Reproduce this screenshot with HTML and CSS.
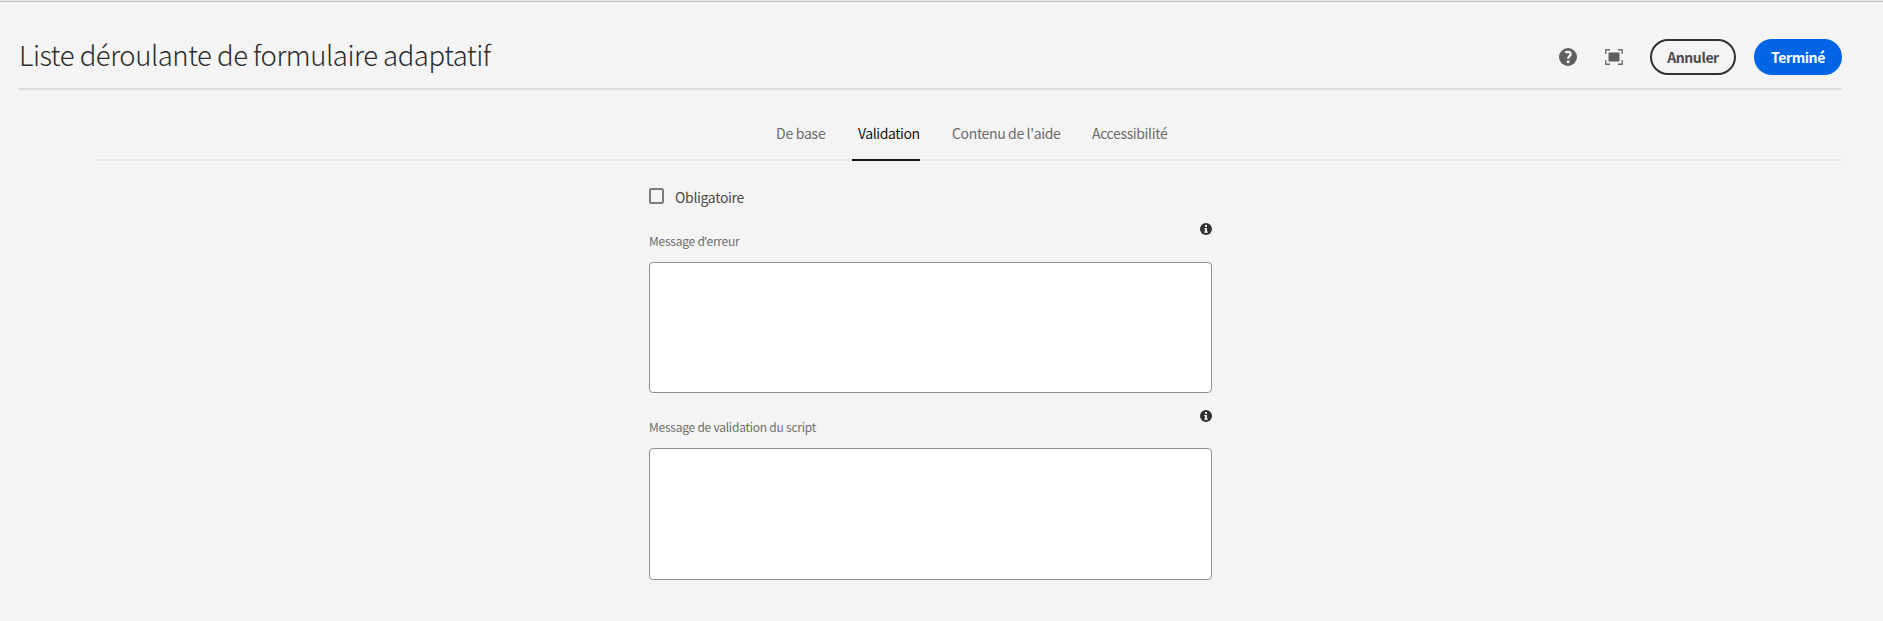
FILE: index.html
```html
<!DOCTYPE html>
<html lang="fr">
<head>
<meta charset="utf-8">
<title>Liste déroulante de formulaire adaptatif</title>
<link rel="stylesheet" href="styles.css">
</head>
<body>
<header class="header">
  <h1 class="title"><span>Liste déroulante de formulaire adaptatif</span></h1>
  <div class="actions">
    <svg class="icon-help" width="18" height="18" viewBox="0 0 18 18"><circle cx="9" cy="9" r="9" fill="#606060"/><path d="M6.2 4.6Q7.4 3.9 8.9 3.9C10.7 3.9 11.6 4.8 11.6 6.1C11.6 8.1 9.1 8.3 9.1 10.8" fill="none" stroke="#f4f4f4" stroke-width="2.3"/><circle cx="9.1" cy="13.8" r="1.5" fill="#f4f4f4"/></svg>
    <svg class="icon-full" width="18" height="16" viewBox="0 0 18 16"><path fill="#606060" d="M3.5 3.5h11v9h-11z"/><path d="M5 .75H.75V5M13 .75h4.25V5M5 15.25H.75V11M13 15.25h4.25V11" fill="none" stroke="#6a6a6a" stroke-width="1.3"/></svg>
    <button class="btn cancel"><span>Annuler</span></button>
    <button class="btn done"><span>Terminé</span></button>
  </div>
</header>
<nav class="tabs">
  <a class="tab t1"><span>De base</span></a>
  <a class="tab t2 active"><span>Validation</span></a>
  <a class="tab t3"><span>Contenu de l'aide</span></a>
  <a class="tab t4"><span>Accessibilité</span></a>
</nav>
<main class="form">
  <label class="check"><i class="box"></i><span>Obligatoire</span></label>
  <section class="field first">
    <div class="label-row"><label><span>Message d<span class="apos">’</span>erreur</span></label>
      <svg class="info" width="12" height="12" viewBox="0 0 12 12"><circle cx="6" cy="6" r="6" fill="#323232"/><path d="M5 2h2v2H5zM4.3 5H7v3.4h.9v1.3H4.2V8.4h.9V6.2h-.8z" fill="#f4f4f4"/></svg>
    </div>
    <textarea class="area"></textarea>
  </section>
  <section class="field second">
    <div class="label-row"><label><span>Message de validation du script</span></label>
      <svg class="info" width="12" height="12" viewBox="0 0 12 12"><circle cx="6" cy="6" r="6" fill="#323232"/><path d="M5 2h2v2H5zM4.3 5H7v3.4h.9v1.3H4.2V8.4h.9V6.2h-.8z" fill="#f4f4f4"/></svg>
    </div>
    <textarea class="area"></textarea>
  </section>
</main>
</body>
</html>
```
FILE: styles.css
```css
* { box-sizing: border-box; }
body {
  margin: 0;
  height: 621px;
  overflow: hidden;
  padding-top: 2px;
  background: #f4f4f4 linear-gradient(#e2e2e2 0 1px, #c2c2c2 1px 2px) no-repeat 0 0 / 100% 2px;
  font-family: "Noto Sans CJK SC", "Noto Sans", sans-serif;
  color: #4b4b4b;
}
span { white-space: nowrap; }
.header {
  display: flex;
  justify-content: space-between;
  height: 88px;
  margin: 0 41px 0 19px;
  border-bottom: 2px solid #dedede;
}
.title {
  margin: 32px 0 0 0;
  font-size: 27.5px;
  line-height: 40px;
  letter-spacing: -0.46px;
  font-weight: 300;
  color: #2c2c2c;
}
.actions { display: flex; align-items: center; height: 36px; margin-top: 37px; }
.icon-help { margin-right: 28px; }
.icon-full { margin-right: 27px; }
.btn {
  height: 36px;
  padding: 0;
  border-radius: 18px;
  font-family: inherit;
  font-size: 14px;
  line-height: 30px;
  letter-spacing: -0.4px;
  font-weight: 700;
}
.cancel { width: 86px; margin-right: 18px; border: 2px solid #323232; background: transparent; color: #4b4b4b; }
.done { width: 88px; border: 0; background: #0265e6; color: #fff; }
.tabs {
  display: flex;
  height: 71px;
  margin: 0 41px 0 96px;
  padding-left: 680px;
  border-bottom: 2px solid #e6e6e6;
}
.tab { height: 71px; padding-top: 31px; font-size: 14px; line-height: 24px; letter-spacing: -0.36px; color: #6b6b6b; }
.t1 { width: 76px; letter-spacing: -0.25px; }
.t2 { width: 68px; padding-left: 6px; margin-right: 32px; letter-spacing: -0.42px; }
.t3 { width: 140px; }
.active { color: #161616; border-bottom: 2px solid #161616; }
.form { width: 563px; margin-left: 649px; padding-top: 23px; }
.check { display: flex; align-items: center; height: 24px; font-size: 14px; line-height: 24px; letter-spacing: -0.33px; }
.check span { padding-top: 1px; }
.box { width: 15px; height: 16px; margin-right: 11px; border: 2px solid #7c7c7c; border-radius: 2px; }
.field { display: flex; flex-direction: column; }
.first { margin-top: 15px; }
.second { margin-top: 17px; }
.label-row { display: flex; justify-content: space-between; height: 39px; font-size: 12px; line-height: 20px; letter-spacing: -0.24px; color: #6e6e6e; }
.label-row label { margin-top: 8px; }
.apos { font-family: "Noto Sans", sans-serif; }
.area {
  display: block;
  width: 563px;
  height: 131px;
  border: 1px solid #909090;
  border-radius: 4px;
  background: #fff;
  resize: none;
}
.second .label-row { height: 38px; }
.second label { margin-top: 7px; }
.second .area { height: 132px; }
```
